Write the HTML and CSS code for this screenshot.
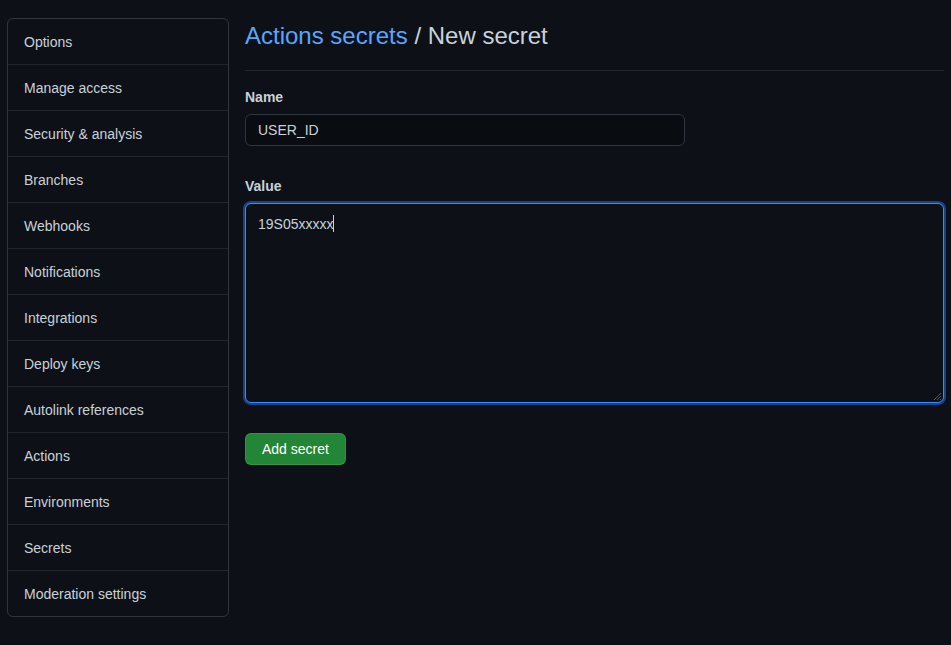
FILE: index.html
```html
<!DOCTYPE html>
<html>
<head>
<meta charset="utf-8">
<link rel="stylesheet" href="styles.css">
</head>
<body>
<div class="page">
  <nav class="menu">
    <a class="item">Options</a>
    <a class="item">Manage access</a>
    <a class="item">Security &amp; analysis</a>
    <a class="item">Branches</a>
    <a class="item">Webhooks</a>
    <a class="item">Notifications</a>
    <a class="item">Integrations</a>
    <a class="item">Deploy keys</a>
    <a class="item">Autolink references</a>
    <a class="item">Actions</a>
    <a class="item">Environments</a>
    <a class="item">Secrets</a>
    <a class="item">Moderation settings</a>
  </nav>
  <main class="main">
    <h2 class="title"><a class="link">Actions secrets</a> / New secret</h2>
    <div class="field">
      <label class="label">Name</label>
      <div class="input">USER_ID</div>
    </div>
    <div class="field">
      <label class="label">Value</label>
      <div class="textarea">19S05xxxxx<span class="caret"></span>
        <svg class="grip" width="10" height="10" viewBox="0 0 10 10"><path d="M9 2L2 9M9 5L5 9M9 8L8 9" stroke="#555" stroke-width="1"/></svg>
      </div>
    </div>
    <div><button class="btn">Add secret</button></div>
  </main>
</div>
</body>
</html>
```
FILE: styles.css
```css
html, body { margin: 0; padding: 0; background: #0d1117; }
body { font-family: "Liberation Sans", Arial, sans-serif; font-size: 14px; color: #c9d1d9; }
.page { display: flex; align-items: flex-start; gap: 16px; padding: 18px 7px 0 7px; }
.menu { width: 222px; flex: none; box-sizing: border-box; border: 1px solid #30363d; border-radius: 6px; display: flex; flex-direction: column; }
.item { display: block; height: 46px; line-height: 47px; padding: 0 16px; border-bottom: 1px solid #21262d; color: #c9d1d9; box-sizing: border-box; overflow: hidden; }
.item:last-child { border-bottom: none; height: 45px; }
.main { flex: 1; min-width: 0; }
.title { margin: 0; font-size: 24px; line-height: 36px; font-weight: 400; color: #c9d1d9; padding-bottom: 16px; border-bottom: 1px solid #21262d; }
.link { color: #58a6ff; }
.field { margin-top: 16px; }
.field + .field { margin-top: 30px; }
.label { display: block; font-weight: 700; line-height: 20px; margin-bottom: 7px; color: #c9d1d9; }
.input { width: 440px; height: 32px; box-sizing: border-box; border: 1px solid #30363d; border-radius: 6px; background: #090c10; padding: 0 12px; line-height: 30px; color: #c9d1d9; }
.textarea { position: relative; height: 200px; box-sizing: border-box; border: 1px solid #388bfd; border-radius: 6px; background: #0d1117; padding: 10px 12px; line-height: 20px; box-shadow: 0 0 0 2px rgba(31,111,235,0.55); color: #c9d1d9; }
.caret { display: inline-block; width: 1px; height: 17px; background: #c9d1d9; vertical-align: -3px; }
.grip { position: absolute; right: 1px; bottom: 1px; }
.btn { margin-top: 30px; height: 32px; padding: 0 16px; border: 1px solid rgba(240,246,252,0.1); border-radius: 6px; background: #238636; color: #fff; font-family: "Liberation Sans", Arial, sans-serif; font-size: 14px; line-height: 20px; }
```
